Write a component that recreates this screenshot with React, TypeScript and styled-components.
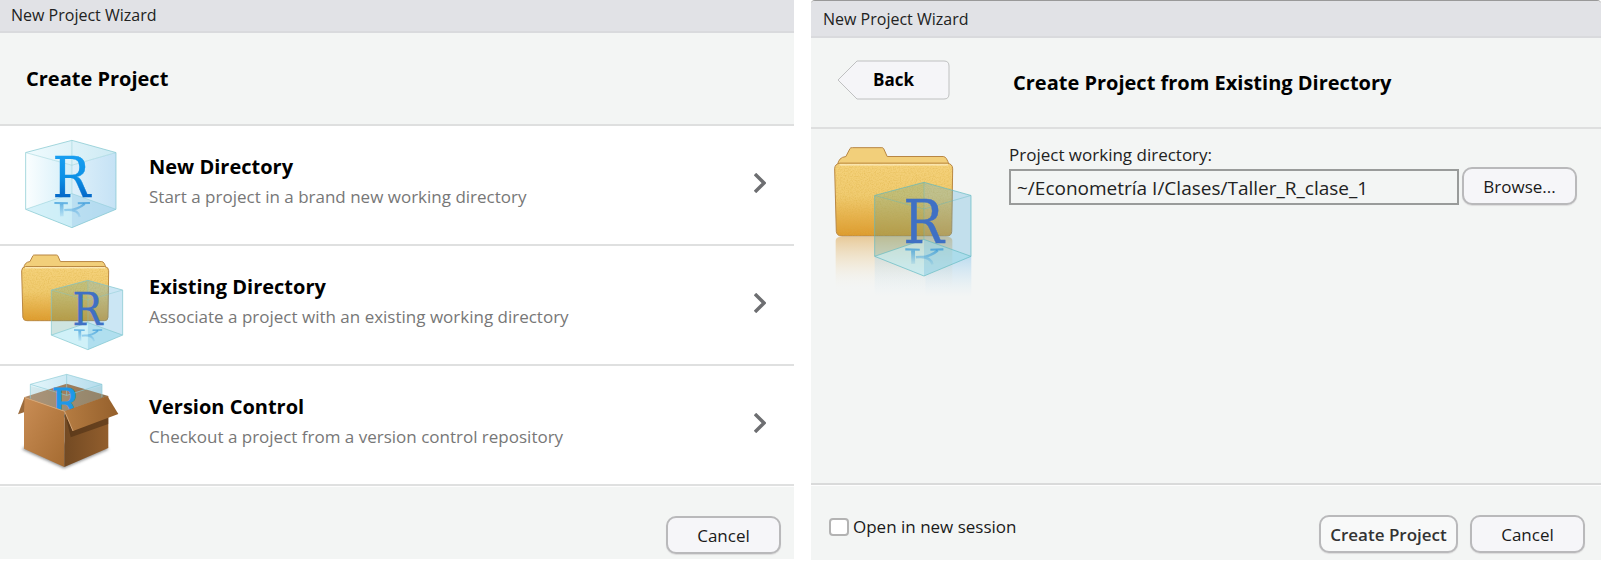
import React, { useId, useState } from "react";
import styled, { createGlobalStyle, css } from "styled-components";

const GlobalStyle = createGlobalStyle`
  *, *::before, *::after { box-sizing: border-box; }
  body {
    margin: 0;
    background: #fff;
    color: #000;
    font-family: "Segoe UI", "Open Sans", "Noto Sans", sans-serif;
  }
  button, input { font: inherit; color: inherit; }
`;

const Page = styled.main`
  display: grid;
  grid-template-columns: minmax(0, 794fr) minmax(0, 790fr);
  gap: 17px;
  align-items: start;
`;

const Dialog = styled.section<{ $framed?: boolean }>`
  display: flex;
  flex-direction: column;
  background: #f3f5f4;
  ${(p) => p.$framed && css`
    border-top: 1px solid #999;
    border-radius: 4px 4px 0 0;
  `}
`;

const TitleBar = styled.div<{ $tall?: boolean }>`
  height: ${(p) => (p.$tall ? 37 : 33)}px;
  padding: ${(p) => (p.$tall ? "0 12px" : "0 11px 2px")};
  display: flex;
  align-items: center;
  background: #e1e2e6;
  border-bottom: 2px solid #d9dadd;
  border-radius: inherit;
  color: #222;
  font-size: 16px;
`;

const Header = styled.header<{ $columns?: boolean }>`
  display: grid;
  grid-template-columns: ${(p) => (p.$columns ? "176px 1fr" : "1fr")};
  align-items: center;
  height: ${(p) => (p.$columns ? 91 : 93)}px;
  padding: 0 26px;
  border-bottom: 2px solid #dedfdf;
`;

const Heading = styled.h1`
  margin: 0;
  font-size: 20px;
  line-height: 28px;
  font-weight: 700;
`;

const BackButton = styled.button`
  position: relative;
  width: 113px;
  height: 40px;
  margin-bottom: 6px;
  padding: 0;
  border: 0;
  background: none;
  font-size: 17px;
  font-weight: 700;
  svg { position: absolute; inset: 0; }
  span { position: relative; }
`;

const OptionList = styled.ul`
  margin: 0;
  padding: 0;
  list-style: none;
`;

const Option = styled.button`
  display: flex;
  align-items: center;
  width: 100%;
  height: 120px;
  padding: 0 28px 0 0;
  border: 0;
  border-bottom: 2px solid #dfe0e0;
  background: #fff;
  text-align: left;
`;

const OptionText = styled.span`
  display: flex;
  flex-direction: column;
  gap: 2px;
  flex: 1;
  margin-left: 23px;
  padding-bottom: 6px;
`;

const OptionTitle = styled.span`
  font-size: 20px;
  line-height: 28px;
  font-weight: 700;
`;

const OptionNote = styled.span`
  font-size: 17px;
  line-height: 28px;
  color: #777;
`;

const ChevronIcon = styled.svg`
  margin-bottom: 4px;
`;

const Body = styled.div`
  display: grid;
  grid-template-columns: 198px minmax(0, 1fr);
  align-items: start;
  min-height: 356px;
  padding-right: 24px;
  border-bottom: 2px solid #d9dada;
`;

const Field = styled.div`
  display: flex;
  flex-direction: column;
  padding-top: 14px;
  label { font-size: 17px; line-height: 24px; color: #222; }
`;

const FieldRow = styled.div`
  display: flex;
  align-items: flex-start;
  gap: 3px;
`;

const PathInput = styled.input`
  flex: 1;
  min-width: 0;
  height: 36px;
  padding: 2px 6px 0;
  border: 2px solid #999b9a;
  border-radius: 0;
  background: transparent;
  color: #222;
  font-size: 19px;
  margin-top: 2px;
`;

const Footer = styled.footer<{ $split?: boolean }>`
  display: flex;
  align-items: flex-start;
  justify-content: ${(p) => (p.$split ? "space-between" : "flex-end")};
  min-height: ${(p) => (p.$split ? 75 : 73)}px;
  padding: ${(p) => (p.$split ? "29px 16px 0 18px" : "29px 13px 0")};
  border-top: 1px solid #fdfdfd;
`;

const Actions = styled.div`
  display: flex;
  gap: 12px;
`;

const Button = styled.button<{ $primary?: boolean }>`
  width: ${(p) => (p.$primary ? 139 : 115)}px;
  height: 38px;
  padding: 0;
  border: 2px solid #b9b9bb;
  border-radius: 10px;
  background: ${(p) => (p.$primary ? "#f8f9f9" : "#f6f6f9")};
  box-shadow: 0 1px 1px #dcdcdc;
  color: ${(p) => (p.$primary ? "#333" : "#1a1a1a")};
  font-size: 17px;
  font-weight: ${(p) => (p.$primary ? 600 : 400)};
`;

const CheckLabel = styled.label`
  display: flex;
  align-items: center;
  gap: 4px;
  font-size: 17px;
  line-height: 24px;
  color: #1a1a1a;
`;

const Checkbox = styled.input`
  appearance: none;
  width: 20px;
  height: 18px;
  margin: 0;
  border: 2px solid #b3b3b3;
  border-radius: 4px;
  background: #fff;
  &:checked { background: #6f8fb8; }
`;

interface CubeProps {
  x: number;
  y: number;
  /** width and height of the whole cube */
  w: number;
  h: number;
  clear?: boolean;
  size: number;
  line?: string;
}

/** Glass cube holding the R mark and its reflection. */
function Cube({ x, y, w, h, clear, size, line = "#7cc4cc" }: CubeProps) {
  const id = useId();
  const cx = x + w * 0.512;
  const r = x + w;
  const top = y + h * 0.14;
  const mid = y + h * 0.285;
  const low = y + h * 0.79;
  const back = y + h * 0.61;
  const bottom = y + h;
  const base = y + h * 0.65;
  const tx = x + w * 0.508;
  const ink = clear ? "#3f70c4" : `url(#${id}r)`;
  return (
    <g>
      <defs>
        <linearGradient id={`${id}l`} x1="0" x2="1">
          <stop offset="0" stopColor="#fbfeff" />
          <stop offset="1" stopColor="#d2eef8" />
        </linearGradient>
        <linearGradient id={`${id}g`} x1="0" x2="1">
          <stop offset="0" stopColor="#def0fa" />
          <stop offset="1" stopColor="#c5e2f5" />
        </linearGradient>
        <linearGradient id={`${id}t`} x1="0" x2="1">
          <stop offset="0" stopColor="#f0fbfe" />
          <stop offset="1" stopColor="#cdeaf3" />
        </linearGradient>
        <linearGradient id={`${id}r`} x1="0" y1="0" x2="0" y2="1">
          <stop offset="0.2" stopColor="#179df0" />
          <stop offset="0.5" stopColor="#0b90e6" />
          <stop offset="0.8" stopColor="#0468c8" />
        </linearGradient>
        <linearGradient id={`${id}f`} gradientUnits="userSpaceOnUse" x1="0" y1="0" x2="0" y2="48">
          <stop offset="0" stopColor="#2d94d8" stopOpacity="0.7" />
          <stop offset="1" stopColor="#2d94d8" stopOpacity="0.08" />
        </linearGradient>
      </defs>
      {clear ? (
        <g>
          <path d={`M${x} ${top}L${cx} ${y}L${cx} ${back}L${x} ${low}Z`} fill="#4a9a90" opacity="0.27" />
          <path d={`M${cx} ${y}L${r} ${top}V${low}L${cx} ${back}Z`} fill="#45a6d6" opacity="0.28" />
          <path d={`M${x} ${low}L${cx} ${back}L${r} ${low}L${cx} ${bottom}Z`} fill="#a9e6f3" opacity="0.55" />
          <path d={`M${cx} ${back}L${r} ${low}L${cx} ${bottom}Z`} fill="#68b5da" opacity="0.3" />
        </g>
      ) : (
        <g>
          <path d={`M${x} ${top}L${cx} ${mid}V${bottom}L${x} ${low}Z`} fill={`url(#${id}l)`} />
          <path d={`M${r} ${top}L${cx} ${mid}V${bottom}L${r} ${low}Z`} fill={`url(#${id}g)`} />
          <path d={`M${x} ${top}L${cx} ${y}L${r} ${top}L${cx} ${mid}Z`} fill={`url(#${id}t)`} />
          <path d={`M${x} ${low}L${cx} ${back}V${bottom}Z`} fill="#c8edf6" opacity="0.7" />
          <path d={`M${r} ${low}L${cx} ${back}V${bottom}Z`} fill="#a8d5ec" opacity="0.65" />
        </g>
      )}
      <g fill="none" stroke={line} strokeWidth="2.5" strokeLinejoin="round" opacity="0.8">
        <path d={`M${x} ${top}L${cx} ${y}L${r} ${top}V${low}L${cx} ${bottom}L${x} ${low}Z`} />
        <path d={`M${x} ${top}L${cx} ${mid}L${r} ${top}M${cx} ${y}V${back}`} opacity="0.6" />
        <path d={`M${x} ${low}L${cx} ${back}L${r} ${low}`} opacity={clear ? 1 : 0.6} />
      </g>
      <text x={tx} y={base} fontFamily="DejaVu Serif Condensed, DejaVu Serif, serif" fontSize={size} textAnchor="middle" fill={ink} stroke={ink} strokeWidth="1">R</text>
      <g transform={`translate(${tx - w * 0.19} ${base + h * 0.055}) scale(${size / 170})`} fill="none" stroke={`url(#${id}f)`}>
        <path d="M0 3L41 4M71 4L108 3" strokeWidth="6" />
        <path d="M22 6L22.5 44" strokeWidth="11" />
        <path d="M92 6Q70 24 44 25M30 25Q72 20 77 46" strokeWidth="7" />
      </g>
    </g>
  );
}

interface FolderProps { x: number; y: number; w: number; h: number }

/** Manila folder with its tab at the upper left. */
function Folder({ x, y, w, h }: FolderProps) {
  const id = useId();
  const X = (t: number) => x + w * t;
  const Y = (t: number) => y + h * t;
  const backPath = `M${X(0.025)} ${Y(0.2)}Q${X(0.03)} ${Y(0.11)} ${X(0.095)} ${Y(0.1)}L${X(0.13)} ${Y(0.01)}Q${X(0.132)} ${y} ${X(0.15)} ${y}H${X(0.4)}Q${X(0.41)} ${y} ${X(0.415)} ${Y(0.01)}L${X(0.445)} ${Y(0.1)}H${X(0.92)}Q${X(0.95)} ${Y(0.1)} ${X(0.97)} ${Y(0.2)}Z`;
  const frontPath = `M${x} ${Y(0.24)}Q${x} ${Y(0.185)} ${X(0.045)} ${Y(0.175)}H${X(0.955)}Q${X(1)} ${Y(0.185)} ${X(1)} ${Y(0.24)}L${X(0.992)} ${Y(0.95)}Q${X(0.99)} ${Y(1)} ${X(0.95)} ${Y(1)}H${X(0.06)}Q${X(0.02)} ${Y(1)} ${X(0.014)} ${Y(0.95)}Z`;
  return (
    <g stroke="#b88643" strokeWidth="3">
      <defs>
        <linearGradient id={`${id}a`} x1="0" y1="0" x2="0" y2="1">
          <stop offset="0" stopColor="#f5d27b" />
          <stop offset="0.45" stopColor="#f0cb70" />
          <stop offset="1" stopColor="#dd9a2d" />
        </linearGradient>
        <filter id={`${id}n`} x="0" y="0" width="1" height="1">
          <feTurbulence type="fractalNoise" baseFrequency="0.25" numOctaves="2" result="n" />
          <feColorMatrix in="n" type="matrix" values="0 0 0 0 0.7  0 0 0 0 0.42  0 0 0 0 0.05  0.9 0 0 0 -0.35" />
          <feComposite in2="SourceGraphic" operator="in" />
        </filter>
      </defs>
      <path d={backPath} fill="#f2cf7a" />
      <path d={frontPath} fill={`url(#${id}a)`} />
      <path d={frontPath} fill="#fff" stroke="none" filter={`url(#${id}n)`} />
      <path d={`M${X(0.04)} ${Y(0.195)}H${X(0.96)}`} stroke="#fff3cf" />
    </g>
  );
}

function NewDirectoryIcon() {
  return (
    <svg width="126" height="118" viewBox="0 18 378 354" aria-hidden="true">
      <Cube x={77} y={61} w={271} h={262} size={168} />
    </svg>
  );
}

function ExistingDirectoryIcon() {
  return (
    <svg width="126" height="118" viewBox="0 18 378 354" aria-hidden="true">
      <Folder x={65} y={45} w={261} h={197} />
      <Cube x={154} y={121} w={214} h={208} size={133} clear />
    </svg>
  );
}

function BoxIcon() {
  const id = useId();
  return (
    <svg width="126" height="118" viewBox="0 18 378 354" aria-hidden="true">
      <defs>
        <linearGradient id={`${id}a`} x1="0" y1="0" x2="1" y2="1">
          <stop offset="0" stopColor="#c98d55" />
          <stop offset="1" stopColor="#a56b31" />
        </linearGradient>
        <linearGradient id={`${id}b`} x1="0" x2="1">
          <stop offset="0" stopColor="#734a23" />
          <stop offset="1" stopColor="#925e2d" />
        </linearGradient>
        <linearGradient id={`${id}c`} x1="0" x2="1">
          <stop offset="0" stopColor="#b57c42" />
          <stop offset="1" stopColor="#95602c" />
        </linearGradient>
        <linearGradient id={`${id}d`} x1="0" x2="1">
          <stop offset="0" stopColor="#b08a68" />
          <stop offset="1" stopColor="#8d7351" />
        </linearGradient>
        <linearGradient id={`${id}g`} x1="0" x2="1">
          <stop offset="0" stopColor="#e4f6fb" />
          <stop offset="1" stopColor="#b5dcec" />
        </linearGradient>
        <filter id={`${id}s`}><feGaussianBlur stdDeviation="5" /></filter>
      </defs>
      <path d="M66 268L192 325L326 268L300 250H90Z" fill="#444" opacity="0.6" filter={`url(#${id}s)`} />
      <path d="M91 73L200 43L306 73V118H91Z" fill={`url(#${id}g)`} />
      <path d="M72 112L200 71L325 108L194 154Z" fill={`url(#${id}d)`} />
      <path d="M91 78V118L194 154L306 114V78L200 106Z" fill="#9fc0c0" opacity="0.22" />
      <g fill="none" stroke="#8ecbd6" strokeWidth="2.5" opacity="0.8">
        <path d="M91 116V73L200 43L306 73V112M91 73L200 106L306 73M200 43V106" />
      </g>
      <text x="196" y="172" fontFamily="DejaVu Serif Condensed, DejaVu Serif, serif" fontSize="118" textAnchor="middle" fill="#1d98e8" stroke="#1d98e8" strokeWidth="3">R</text>
      <path d="M72 112L194 154L193 321L72 266Z" fill={`url(#${id}a)`} />
      <path d="M194 154L325 108V264L193 321Z" fill={`url(#${id}b)`} />
      <path d="M200 180L212 232L325 192V172Z" fill="#4f3115" opacity="0.6" />
      <path d="M74 110L54 163L72 157Z" fill="#9b6a3b" />
      <path d="M194 154L322 108L355 162L219 213Z" fill={`url(#${id}c)`} />
      <path d="M194 154L219 213M72 112L194 154" stroke="#d5a676" strokeWidth="3" />
    </svg>
  );
}

function ProjectArtwork() {
  const id = useId();
  return (
    <svg width="198" height="180" viewBox="33 387 594 540" aria-hidden="true">
      <defs>
        <linearGradient id={`${id}a`} x1="0" y1="0" x2="0" y2="1">
          <stop offset="0" stopColor="#e3b873" stopOpacity="0.7" />
          <stop offset="0.5" stopColor="#efd9b2" stopOpacity="0.4" />
          <stop offset="1" stopColor="#f3f5f4" stopOpacity="0" />
        </linearGradient>
        <linearGradient id={`${id}b`} x1="0" y1="0" x2="0" y2="1">
          <stop offset="0" stopColor="#a9d3ee" stopOpacity="0.75" />
          <stop offset="1" stopColor="#d0e6f5" stopOpacity="0" />
        </linearGradient>
      </defs>
      <path d="M107 722Q108 711 120 711H444Q456 711 457 722V872H107Z" fill={`url(#${id}a)`} />
      <path d="M224 767L376 828V890H224Z" fill={`url(#${id}b)`} opacity="0.5" />
      <path d="M514 767L376 828V890H514Z" fill={`url(#${id}b)`} />
      <Folder x={104} y={443} w={354} h={265} />
      <Cube x={224} y={547} w={289} h={281} size={180} clear line="#5fb9c0" />
    </svg>
  );
}

function Chevron() {
  return (
    <ChevronIcon width="12" height="20" viewBox="0 0 12 20" fill="none" stroke="#6d6e71" strokeWidth="3.4" aria-hidden="true">
      <path d="M1 1L10 10L1 19" />
    </ChevronIcon>
  );
}

const options = [
  { title: "New Directory", note: "Start a project in a brand new working directory", Icon: NewDirectoryIcon },
  { title: "Existing Directory", note: "Associate a project with an existing working directory", Icon: ExistingDirectoryIcon },
  { title: "Version Control", note: "Checkout a project from a version control repository", Icon: BoxIcon },
];

export default function App() {
  const [path, setPath] = useState("~/Econometría I/Clases/Taller_R_clase_1");
  return (
    <>
      <GlobalStyle />
      <Page>
        <Dialog>
          <TitleBar>New Project Wizard</TitleBar>
          <Header><Heading>Create Project</Heading></Header>
          <OptionList>
            {options.map(({ title, note, Icon }) => (
              <li key={title}>
                <Option type="button">
                  <Icon />
                  <OptionText>
                    <OptionTitle>{title}</OptionTitle>
                    <OptionNote>{note}</OptionNote>
                  </OptionText>
                  <Chevron />
                </Option>
              </li>
            ))}
          </OptionList>
          <Footer><Button type="button">Cancel</Button></Footer>
        </Dialog>

        <Dialog $framed>
          <TitleBar $tall>New Project Wizard</TitleBar>
          <Header $columns>
            <BackButton type="button">
              <svg width="113" height="40" viewBox="0 0 113 40" fill="#f5f5f8" stroke="#bfc0c1" aria-hidden="true">
                <path d="M1 20L20 1H107Q112 1 112 6V34Q112 39 107 39H20Z" />
              </svg>
              <span>Back</span>
            </BackButton>
            <Heading as="h2">Create Project from Existing Directory</Heading>
          </Header>
          <Body>
            <ProjectArtwork />
            <Field>
              <label htmlFor="project-path">Project working directory:</label>
              <FieldRow>
                <PathInput id="project-path" type="text" value={path} onChange={(e) => setPath(e.target.value)} />
                <Button type="button">Browse...</Button>
              </FieldRow>
            </Field>
          </Body>
          <Footer $split>
            <CheckLabel><Checkbox type="checkbox" />Open in new session</CheckLabel>
            <Actions>
              <Button type="button" $primary>Create Project</Button>
              <Button type="button">Cancel</Button>
            </Actions>
          </Footer>
        </Dialog>
      </Page>
    </>
  );
}
